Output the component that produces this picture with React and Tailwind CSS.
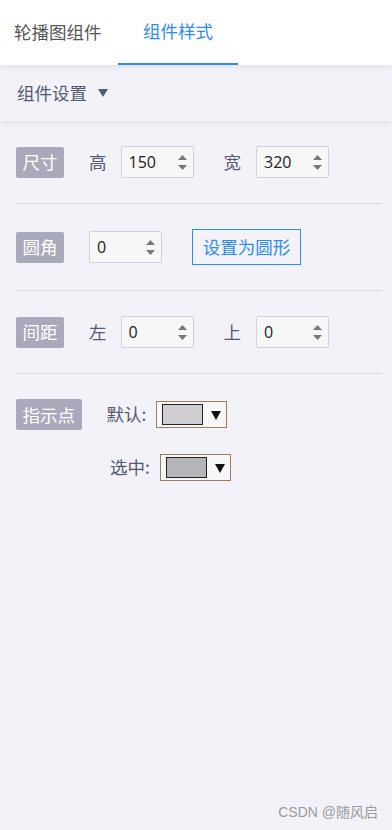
import { useState } from "react";

const font = { fontFamily: '"Microsoft YaHei", "Noto Sans CJK SC", "Noto Sans", sans-serif' };

function Badge({ children }) {
  return (
    <span className="inline-flex h-[31px] items-center rounded-[2px] bg-[#aaa9bc] px-[6.5px] text-[17.5px] leading-none text-white">
      {children}
    </span>
  );
}

function NumInput({ value }) {
  return (
    <div className="flex h-[32px] w-[73px] items-center justify-between rounded-[2px] border border-[#cdd3dc] bg-[#f7f7f8] pl-[7px] pr-[6px]">
      <span className="text-[16px] text-[#222]" style={{ fontFamily: '"Open Sans", "Noto Sans", sans-serif' }}>{value}</span>
      <span className="flex flex-col gap-[5px]">
        <svg width="9" height="5" viewBox="0 0 9 5"><path d="M4.5 0L9 5H0z" fill="#777" /></svg>
        <svg width="9" height="5" viewBox="0 0 9 5"><path d="M0 0h9L4.5 5z" fill="#777" /></svg>
      </span>
    </div>
  );
}

function ColorPick({ color }) {
  return (
    <div className="flex h-[27px] w-[71px] items-center border border-[#9c7b62] bg-[#f7f7f8] pl-[5px]">
      <span className="h-[21px] w-[41px] border border-[#222]" style={{ background: color }} />
      <svg className="ml-[8px]" width="10" height="10" viewBox="0 0 10 10"><path d="M0 1h10L5 10z" fill="#111" /></svg>
    </div>
  );
}

export default function App() {
  const [tab, setTab] = useState(1);
  return (
    <div className="flex min-h-[830px] flex-col bg-[#f3f2f8]" style={font}>
      {/* tabs */}
      <div className="relative z-20 flex h-[65px] bg-white shadow-[0_2px_6px_rgba(0,0,0,0.07)]">
        <button
          onClick={() => setTab(0)}
          className={`w-[118px] pl-[14px] text-left text-[17.5px] ${tab === 0 ? "text-[#2d8cf0]" : "text-[#555]"}`}
        >
          轮播图组件
        </button>
        <button
          onClick={() => setTab(1)}
          className={`w-[120px] border-b-2 text-[17.5px] ${tab === 1 ? "border-[#2d8cf0] text-[#2d8cf0]" : "border-transparent text-[#555]"}`}
        >
          组件样式
        </button>
      </div>

      {/* section bar */}
      <div className="relative z-10 flex h-[56px] items-center gap-[11px] bg-[#f3f2f8] pl-[17px] shadow-[0_2px_6px_rgba(0,0,0,0.07)]">
        <span className="text-[17.5px] text-[#555a70]">组件设置</span>
        <svg width="10" height="8" viewBox="0 0 10 8"><path d="M0 0h10L5 8z" fill="#555a70" /></svg>
      </div>

      <div className="px-[16px] pr-[10px] text-[17.5px] text-[#555a6e]">
        <div className="flex items-center border-b border-[#d8d9e3] py-[25px]">
          <Badge>尺寸</Badge>
          <span className="ml-[25px] mr-[14px]">高</span>
          <NumInput value="150" />
          <span className="ml-[30px] mr-[15px]">宽</span>
          <NumInput value="320" />
        </div>

        <div className="flex items-center border-b border-[#d8d9e3] py-[25px]">
          <Badge>圆角</Badge>
          <div className="ml-[25px]">
            <NumInput value="0" />
          </div>
          <button className="ml-[30px] h-[36px] w-[109px] border border-[#2d8cf0] text-[17.5px] text-[#2d8cf0]">
            设置为圆形
          </button>
        </div>

        <div className="flex items-center border-b border-[#d8d9e3] py-[25px]">
          <Badge>间距</Badge>
          <span className="ml-[25px] mr-[14px]">左</span>
          <NumInput value="0" />
          <span className="ml-[30px] mr-[15px]">上</span>
          <NumInput value="0" />
        </div>

        <div className="pt-[25px]">
          <div className="flex items-center">
            <Badge>指示点</Badge>
            <span className="ml-[25px] mr-[10px]">默认:</span>
            <ColorPick color="#cfced3" />
          </div>
          <div className="ml-[94px] mt-[24px] flex items-center">
            <span className="mr-[10px]">选中:</span>
            <ColorPick color="#b5b4b9" />
          </div>
        </div>
      </div>

      <div className="mt-auto pb-[7px] pr-[14px] text-right text-[14px] text-[#9a9a9a]" style={{ fontFamily: '"Liberation Sans", "Noto Sans CJK SC", sans-serif' }}>
        CSDN @随风启
      </div>
    </div>
  );
}
